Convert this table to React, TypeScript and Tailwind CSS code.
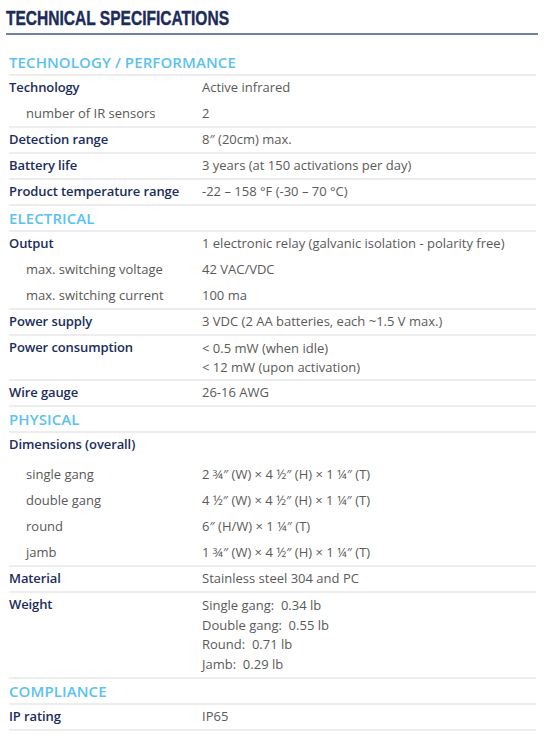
type Row = {
  label: string;
  sub?: boolean;
  values: string[];
  gapTop?: boolean;
  multi?: string;
};

type Group = Row[];

type Section = {
  title: string;
  groups: Group[];
};

const specs: Section[] = [
  {
    title: "TECHNOLOGY / PERFORMANCE",
    groups: [
      [
        { label: "Technology", values: ["Active infrared"] },
        { label: "number of IR sensors", sub: true, values: ["2"] },
      ],
      [{ label: "Detection range", values: ["8\u2033 (20cm) max."] }],
      [{ label: "Battery life", values: ["3 years (at 150 activations per day)"] }],
      [{ label: "Product temperature range", values: ["-22 \u2013 158 \u00b0F (-30 \u2013 70 \u00b0C)"] }],
    ],
  },
  {
    title: "ELECTRICAL",
    groups: [
      [
        { label: "Output", values: ["1 electronic relay (galvanic isolation - polarity free)"] },
        { label: "max. switching voltage", sub: true, values: ["42 VAC/VDC"] },
        { label: "max. switching current", sub: true, values: ["100 ma"] },
      ],
      [{ label: "Power supply", values: ["3 VDC (2 AA batteries, each ~1.5 V max.)"] }],
      [
        {
          label: "Power consumption",
          values: ["< 0.5 mW (when idle)", "< 12 mW (upon activation)"],
          multi: "pt-[3px] pb-[2px] leading-[19px]",
        },
      ],
      [{ label: "Wire gauge", values: ["26-16 AWG"] }],
    ],
  },
  {
    title: "PHYSICAL",
    groups: [
      [
        { label: "Dimensions (overall)", values: [""] },
        { label: "single gang", sub: true, gapTop: true, values: ["2 \u00be\u2033 (W) \u00d7 4 \u00bd\u2033 (H) \u00d7 1 \u00bc\u2033 (T)"] },
        { label: "double gang", sub: true, values: ["4 \u00bd\u2033 (W) \u00d7 4 \u00bd\u2033 (H) \u00d7 1 \u00bc\u2033 (T)"] },
        { label: "round", sub: true, values: ["6\u2033 (H/W) \u00d7 1 \u00bc\u2033 (T)"] },
        { label: "jamb", sub: true, values: ["1 \u00be\u2033 (W) \u00d7 4 \u00bd\u2033 (H) \u00d7 1 \u00bc\u2033 (T)"] },
      ],
      [{ label: "Material", values: ["Stainless steel 304 and PC"] }],
      [
        {
          label: "Weight",
          values: ["Single gang:  0.34 lb", "Double gang:  0.55 lb", "Round:  0.71 lb", "Jamb:  0.29 lb"],
          multi: "pt-[3px] pb-[3px] leading-[19.5px]",
        },
      ],
    ],
  },
  {
    title: "COMPLIANCE",
    groups: [[{ label: "IP rating", values: ["IP65"] }]],
  },
];

const SpecRow = ({ row, first }: { row: Row; first: boolean }) => (
  <div className={`flex ${first ? "" : "mt-[2px]"} ${row.gapTop ? "pt-[4px]" : ""}`}>
    <div
      className={`w-[193px] shrink-0 h-6 flex items-center ${
        row.sub ? "pl-[17px] text-[#585858]" : "font-semibold text-[#1a2d5c] tracking-[-0.1px]"
      }`}
    >
      {row.label}
    </div>
    {row.multi ? (
      <div className={`flex flex-col text-[#5a5a5a] ${row.multi}`}>
        {row.values.map((v, i) => (
          <div key={i} className="whitespace-pre">
            {v}
          </div>
        ))}
      </div>
    ) : (
      <div className="h-6 flex items-center whitespace-pre text-[#5a5a5a]">{row.values[0]}</div>
    )}
  </div>
);

const App = () => {
  return (
    <div className="w-[545px] h-[737px] bg-white overflow-hidden font-['Open_Sans',sans-serif] text-[13px]">
      <div className="pt-[2px] px-[6px]">
        <h1 className="h-[31px] flex items-center">
          <span className="inline-block origin-left scale-x-[0.74] text-[21px] leading-none font-black text-[#1c2b5a] font-['Liberation_Sans',sans-serif] whitespace-nowrap [-webkit-text-stroke:0.4px_#1c2b5a]">
            TECHNICAL SPECIFICATIONS
          </span>
        </h1>
        <div className="h-[2px] w-[532px] bg-[#7081a3]" />
      </div>

      <div className="pl-[9px] pr-[9px] pt-[15px]">
        {specs.map((s, si) => (
          <div key={si}>
            <div className="box-content h-6 flex items-center text-[15px] font-semibold text-[#5bc2ef] border-b-2 border-[#ededed] tracking-[0.1px]">
              {s.title}
            </div>
            {s.groups.map((g, gi) => (
              <div key={gi} className="border-b-2 border-[#ededed]">
                {g.map((r, ri) => (
                  <SpecRow key={ri} row={r} first={ri === 0} />
                ))}
              </div>
            ))}
          </div>
        ))}
      </div>
    </div>
  );
};

export default App;
